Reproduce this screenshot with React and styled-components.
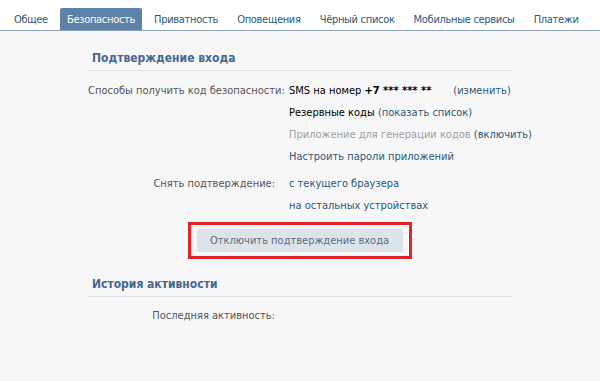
import React from "react";
import styled, { createGlobalStyle } from "styled-components";

const Global = createGlobalStyle`
    html, body { margin: 0; padding: 0; background: #f7f7f7; }
    body {
        font-family: "DejaVu Sans Condensed", "DejaVu Sans", sans-serif;
        font-stretch: condensed;
        font-size: 11px;
    }
`;

const Page = styled.main`
    width: 600px;
    height: 381px;
    background: #f7f7f7;
    overflow: hidden;
`;

const TabBar = styled.nav`
    display: flex;
    align-items: flex-end;
    gap: 5px;
    height: 31px;
    padding-left: 7px;
    background: #ffffff;
    border-bottom: 1px solid #8ea3bb;
    box-sizing: border-box;
`;

const Tab = styled.a`
    display: flex;
    align-items: center;
    height: 22px;
    padding: 0 7px;
    border-radius: 2px 2px 0 0;
    letter-spacing: -0.3px;
    color: ${(p) => (p.$active ? "#ffffff" : "#2b587a")};
    background: ${(p) => (p.$active ? "#5e81a8" : "transparent")};
    white-space: nowrap;
    cursor: pointer;
`;

const Content = styled.div`
    display: flex;
    flex-direction: column;
    padding: 20px 88px 0 88px;
`;

const Section = styled.section`
    display: flex;
    flex-direction: column;
    margin-bottom: ${(p) => p.$gap || 0}px;
`;

const Header = styled.h2`
    margin: 0;
    padding: 0 0 5px 4px;
    font-size: 12px;
    font-weight: bold;
    color: #45688e;
    border-bottom: 1px solid #dae1e8;
`;

const Rows = styled.div`
    display: grid;
    grid-template-columns: 187px 1fr;
    column-gap: 14px;
    row-gap: 8px;
    padding-top: ${(p) => p.$top ?? 13}px;
`;

const Label = styled.div`
    text-align: right;
    color: #555555;
    line-height: 14px;
    white-space: nowrap;
    grid-row: span ${(p) => p.$span || 1};
`;

const Value = styled.div`
    color: ${(p) => (p.$muted ? "#a0a0a0" : "#000000")};
    line-height: 14px;
    white-space: nowrap;
`;

const Link = styled.a`
    color: #2b587a;
    cursor: pointer;
    margin-left: ${(p) => p.$offset || 0}px;
`;

const Phone = styled.b`
    font-weight: bold;
`;

const ButtonRow = styled.div`
    display: flex;
    justify-content: center;
    padding-top: 9px;
    margin-left: -1px;
`;

const Highlight = styled.div`
    display: flex;
    padding: 4px 6px;
    border: 3px solid #e0222a;
`;

const GrayButton = styled.button`
    width: 206px;
    height: 23px;
    border: none;
    border-radius: 2px;
    background: #dde3ea;
    color: #5c6e82;
    font-family: inherit;
    font-stretch: inherit;
    font-size: 11px;
    white-space: nowrap;
    cursor: pointer;
`;

export default function App() {
    const tabs = ["Общее", "Безопасность", "Приватность", "Оповещения", "Чёрный список", "Мобильные сервисы", "Платежи"];
    return (
        <Page>
            <Global />
            <TabBar>
                {tabs.map((t) => (
                    <Tab key={t} $active={t === "Безопасность"}>{t}</Tab>
                ))}
            </TabBar>
            <Content>
                <Section $gap={18}>
                    <Header>Подтверждение входа</Header>
                    <Rows>
                        <Label $span={4}>Способы получить код безопасности:</Label>
                        <Value>SMS на номер <Phone>+7 *** *** **</Phone><Link $offset={22}>(изменить)</Link></Value>
                        <Value>Резервные коды <Link>(показать список)</Link></Value>
                        <Value $muted>Приложение для генерации кодов <Link>(включить)</Link></Value>
                        <Value><Link>Настроить пароли приложений</Link></Value>
                    </Rows>
                    <Rows>
                        <Label $span={2}>Снять подтверждение:</Label>
                        <Value><Link>с текущего браузера</Link></Value>
                        <Value><Link>на остальных устройствах</Link></Value>
                    </Rows>
                    <ButtonRow>
                        <Highlight>
                            <GrayButton>Отключить подтверждение входа</GrayButton>
                        </Highlight>
                    </ButtonRow>
                </Section>
                <Section>
                    <Header>История активности</Header>
                    <Rows $top={12}>
                        <Label>Последняя активность:</Label>
                        <Value />
                    </Rows>
                </Section>
            </Content>
        </Page>
    );
}
